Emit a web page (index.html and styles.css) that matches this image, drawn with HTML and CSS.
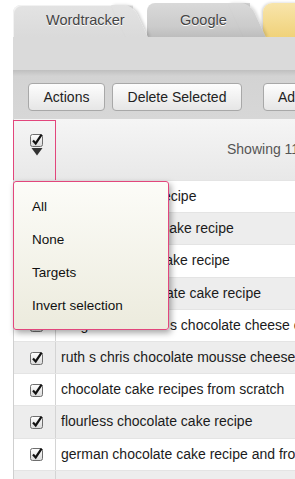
FILE: index.html
```html
<!DOCTYPE html>
<html lang="en">
<head>
    <meta charset="UTF-8">
    <title>Keyword list</title>
    <link rel="stylesheet" href="styles.css">
</head>
<body>
    <div class="app">
        <div class="tabs">
            <div class="tab tab-active">Wordtracker</div>
            <div class="tab tab-google">Google</div>
            <div class="tab tab-yellow"></div>
        </div>
        <div class="panel"></div>
        <div class="toolbar">
            <button class="btn btn-actions">Actions</button>
            <button class="btn btn-delete">Delete Selected</button>
            <button class="btn btn-add">Add Keywords</button>
        </div>
        <div class="grid">
            <div class="grid-head">
                <div class="select-cell">
                    <svg class="box" width="14" height="14" viewBox="0 0 14 14">
                        <defs>
                            <linearGradient id="boxfill" x1="0" y1="0" x2="0" y2="1">
                                <stop offset="0" stop-color="#ffffff"/>
                                <stop offset="1" stop-color="#d9d9d9"/>
                            </linearGradient>
                        </defs>
                        <rect x="0.5" y="1.5" width="12" height="12" rx="2" fill="url(#boxfill)" stroke="#6e6e6e"/>
                        <path d="M3 7.4 L5.7 10.4 L11.6 1.6" fill="none" stroke="#111" stroke-width="2.2"/>
                    </svg>
                    <svg class="caret" width="12" height="8" viewBox="0 0 12 8">
                        <polygon points="0.5,0 11.5,0 6,7.5" fill="#333"/>
                    </svg>
                </div>
                <div class="showing">Showing 11 - 20 of 500</div>
            </div>
            <div class="row"><div class="check-cell"><svg width="14" height="14" viewBox="0 0 14 14"><rect x="0.5" y="1.5" width="12" height="12" rx="2" fill="url(#boxfill)" stroke="#6e6e6e"/><path d="M3 7.4 L5.7 10.4 L11.6 1.6" fill="none" stroke="#111" stroke-width="2.2"/></svg></div><div class="kw">chocolate cake recipe</div></div>
            <div class="row"><div class="check-cell"><svg width="14" height="14" viewBox="0 0 14 14"><rect x="0.5" y="1.5" width="12" height="12" rx="2" fill="url(#boxfill)" stroke="#6e6e6e"/><path d="M3 7.4 L5.7 10.4 L11.6 1.6" fill="none" stroke="#111" stroke-width="2.2"/></svg></div><div class="kw">moist chocolate cake recipe</div></div>
            <div class="row"><div class="check-cell"><svg width="14" height="14" viewBox="0 0 14 14"><rect x="0.5" y="1.5" width="12" height="12" rx="2" fill="url(#boxfill)" stroke="#6e6e6e"/><path d="M3 7.4 L5.7 10.4 L11.6 1.6" fill="none" stroke="#111" stroke-width="2.2"/></svg></div><div class="kw">easy chocolate cake recipe</div></div>
            <div class="row"><div class="check-cell"><svg width="14" height="14" viewBox="0 0 14 14"><rect x="0.5" y="1.5" width="12" height="12" rx="2" fill="url(#boxfill)" stroke="#6e6e6e"/><path d="M3 7.4 L5.7 10.4 L11.6 1.6" fill="none" stroke="#111" stroke-width="2.2"/></svg></div><div class="kw">hershey s chocolate cake recipe</div></div>
            <div class="row"><div class="check-cell"><svg width="14" height="14" viewBox="0 0 14 14"><rect x="0.5" y="1.5" width="12" height="12" rx="2" fill="url(#boxfill)" stroke="#6e6e6e"/><path d="M3 7.4 L5.7 10.4 L11.6 1.6" fill="none" stroke="#111" stroke-width="2.2"/></svg></div><div class="kw">magnolia kitchen s chocolate cheese cake</div></div>
            <div class="row"><div class="check-cell"><svg width="14" height="14" viewBox="0 0 14 14"><rect x="0.5" y="1.5" width="12" height="12" rx="2" fill="url(#boxfill)" stroke="#6e6e6e"/><path d="M3 7.4 L5.7 10.4 L11.6 1.6" fill="none" stroke="#111" stroke-width="2.2"/></svg></div><div class="kw">ruth s chris chocolate mousse cheesecake</div></div>
            <div class="row"><div class="check-cell"><svg width="14" height="14" viewBox="0 0 14 14"><rect x="0.5" y="1.5" width="12" height="12" rx="2" fill="url(#boxfill)" stroke="#6e6e6e"/><path d="M3 7.4 L5.7 10.4 L11.6 1.6" fill="none" stroke="#111" stroke-width="2.2"/></svg></div><div class="kw">chocolate cake recipes from scratch</div></div>
            <div class="row"><div class="check-cell"><svg width="14" height="14" viewBox="0 0 14 14"><rect x="0.5" y="1.5" width="12" height="12" rx="2" fill="url(#boxfill)" stroke="#6e6e6e"/><path d="M3 7.4 L5.7 10.4 L11.6 1.6" fill="none" stroke="#111" stroke-width="2.2"/></svg></div><div class="kw">flourless chocolate cake recipe</div></div>
            <div class="row"><div class="check-cell"><svg width="14" height="14" viewBox="0 0 14 14"><rect x="0.5" y="1.5" width="12" height="12" rx="2" fill="url(#boxfill)" stroke="#6e6e6e"/><path d="M3 7.4 L5.7 10.4 L11.6 1.6" fill="none" stroke="#111" stroke-width="2.2"/></svg></div><div class="kw">german chocolate cake recipe and frosting</div></div>
            <div class="row"><div class="check-cell"></div><div class="kw"></div></div>

            <div class="select-menu">
                <div class="menu-item">All</div>
                <div class="menu-item">None</div>
                <div class="menu-item">Targets</div>
                <div class="menu-item">Invert selection</div>
            </div>
        </div>
    </div>
</body>
</html>
```

FILE: styles.css
```css
body {
    margin: 0;
    background: #fff;
    font-family: "Liberation Sans", Arial, sans-serif;
    overflow: hidden;
    height: 479px;
}
.app {
    margin-left: 13px;
    width: 640px;
}
.tabs {
    display: flex;
    align-items: flex-end;
    height: 34px;
    padding-top: 3px;
}
.tab {
    position: relative;
    box-sizing: border-box;
    font-size: 14.5px;
    color: #444;
    text-shadow: 0 1px 0 #fff;
    white-space: nowrap;
}
/* slanted right side of each tab, kept under the label */
.tab::after {
    content: '';
    position: absolute;
    z-index: -1;
    top: 0;
    left: calc(100% - 22px);
    width: 22px;
    height: 100%;
    background: inherit;
    border-radius: 0 9px 0 0;
    transform: skewX(25deg);
    transform-origin: 0 0;
}
.tab-active {
    z-index: 3;
    width: 120px;
    height: 32px;
    line-height: 30px;
    padding-left: 33px;
    background: linear-gradient(#e3e3e3, #dadada);
    border-radius: 8px 0 0 0;
    box-shadow: inset 1px 1px 0 #f2f2f2;
}
.tab-active::after {
    box-shadow: 2px 0 3px rgba(0,0,0,0.18);
}
.tab-google {
    z-index: 2;
    width: 103px;
    height: 34px;
    line-height: 34px;
    margin-left: 14px;
    padding-left: 33px;
    background: linear-gradient(#d9d9d9, #cbcbcb 70%, #bdbdbd);
    border-radius: 8px 0 0 0;
}
.tab-google::after {
    box-shadow: 2px 0 3px rgba(0,0,0,0.15);
}
.tab-yellow {
    z-index: 1;
    width: 120px;
    height: 34px;
    margin-left: 13px;
    background: linear-gradient(#f8e5ab, #f0d27a);
    border-radius: 9px 0 0 0;
    box-shadow: -1px 0 3px rgba(0,0,0,0.2);
}
.tab-yellow::after {
    display: none;
}
.panel {
    position: relative;
    z-index: 4;
    height: 33px;
    background: #dadada;
}
.toolbar {
    display: flex;
    height: 49px;
    box-sizing: border-box;
    padding: 13px 0 0 15px;
    background: linear-gradient(#bfbfbf, #d3d3d3 6px, #d7d7d7);
}
.btn {
    height: 28px;
    box-sizing: border-box;
    border: 1px solid #a8a8a8;
    border-radius: 4px;
    background: linear-gradient(#fdfdfd, #e6e6e6);
    font-family: "Liberation Sans", Arial, sans-serif;
    font-size: 14px;
    color: #222;
    padding: 0;
    white-space: nowrap;
}
.btn-actions {
    width: 77px;
}
.btn-delete {
    width: 130px;
    margin-left: 7px;
}
.btn-add {
    width: 120px;
    margin-left: 21px;
    text-align: left;
    padding-left: 14px;
}
.grid {
    position: relative;
    border-left: 1px solid #cfcfcf;
}
.grid-head {
    display: flex;
    height: 61px;
    background: linear-gradient(#f5f5f5, #e8e8e8);
}
.select-cell {
    width: 43px;
    margin-left: -1px;
    box-sizing: border-box;
    border: 1px solid #e2467c;
    border-bottom: none;
    margin-top: 1px;
    display: flex;
    flex-direction: column;
    align-items: center;
    padding: 12px 0 0 4px;
}
.caret {
    margin-top: 1px;
}
.showing {
    padding-left: 171px;
    line-height: 60px;
    font-size: 14px;
    color: #555;
    white-space: nowrap;
}
.row {
    display: flex;
    height: 32.2px;
    box-sizing: border-box;
    border-top: 1px solid #e4e4e4;
    background: #fff;
}
.row:nth-of-type(odd) {
    background: #ededed;
}
.check-cell {
    width: 42px;
    flex-shrink: 0;
    box-sizing: border-box;
    border-right: 1px solid #d4d4d4;
    display: flex;
    align-items: center;
    padding-left: 16px;
}
.kw {
    padding-left: 5px;
    font-size: 14px;
    line-height: 31px;
    color: #1b1b1b;
    white-space: nowrap;
}
.select-menu {
    position: absolute;
    left: -1px;
    top: 62px;
    width: 156px;
    height: 149px;
    box-sizing: border-box;
    padding: 8px 0 0 18px;
    border: 1px solid #e2467c;
    border-radius: 3px;
    background: linear-gradient(#fcfcf8, #ecebdd);
    box-shadow: 2px 3px 6px rgba(0,0,0,0.35);
}
.menu-item {
    height: 33px;
    line-height: 33px;
    font-size: 13.5px;
    color: #111;
}
```
